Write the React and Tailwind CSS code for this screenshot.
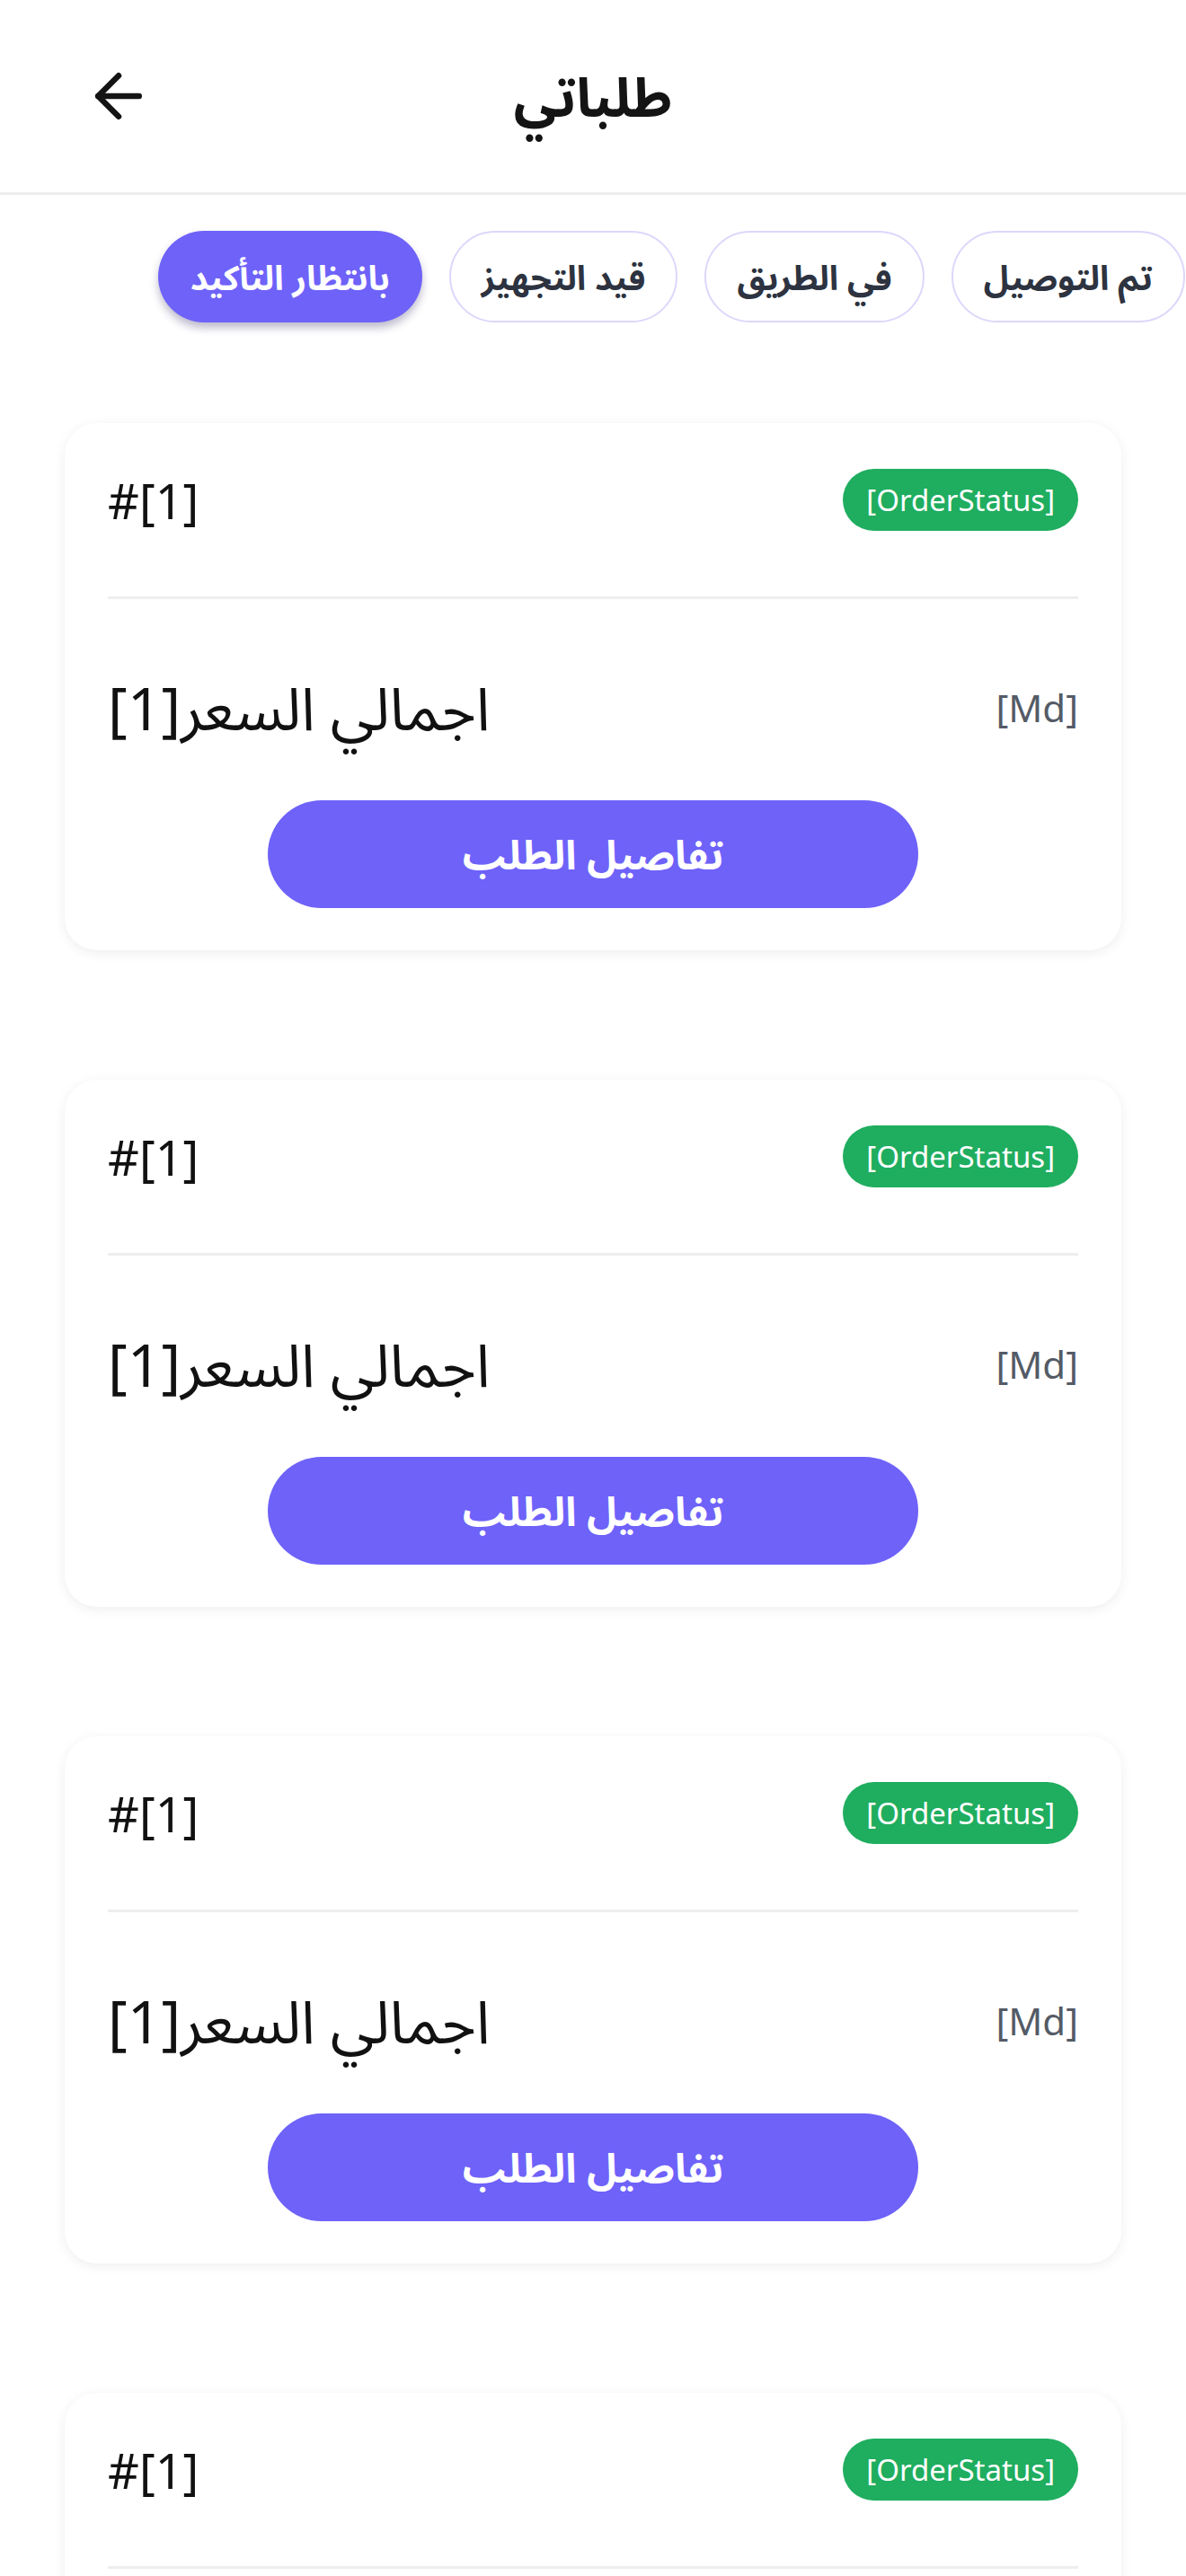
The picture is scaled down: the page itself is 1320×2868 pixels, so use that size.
import React from "react";
import { ArrowLeft } from "lucide-react";

const tabs = [
  { id: "delivered", label: "تم التوصيل" },
  { id: "onway", label: "في الطريق" },
  { id: "preparing", label: "قيد التجهيز" },
  { id: "pending", label: "بانتظار التأكيد" },
];

const orders = [1, 2, 3, 4];

function OrderCard() {
  return (
    <div className="bg-white rounded-[36px] shadow-[0_3px_14px_rgba(0,0,0,0.07)] px-[48px] pt-[51px] pb-[47px]">
      <div className="flex items-center justify-between">
        <span
          dir="ltr"
          className="h-[69px] px-[26px] rounded-full bg-[#1fad5f] text-white text-[33px] flex items-center"
        >
          [OrderStatus]
        </span>
        <span dir="ltr" className="text-[54px] leading-none text-[#111111]">
          #[1]
        </span>
      </div>

      <div className="mt-[73px] h-[3px] bg-[#eeeeee]" />

      <div className="mt-[78px] flex items-center justify-between h-[84px]">
        <span dir="ltr" className="text-[42px] text-[#545b66]">
          [Md]
        </span>
        <span className="text-[66px] leading-none text-[#111111]">اجمالي السعر[1]</span>
      </div>

      <div className="mt-[62px] flex justify-center">
        <button className="w-[724px] h-[120px] rounded-full bg-[#6e62f9] text-white text-[45px] font-bold">
          تفاصيل الطلب
        </button>
      </div>
    </div>
  );
}

export default function App() {
  const active = "pending";

  return (
    <div
      dir="rtl"
      className="w-[1320px] h-[2868px] overflow-hidden bg-white font-['Noto_Sans','Noto_Sans_Arabic','DejaVu_Sans',sans-serif]"
    >
      {/* header */}
      <div className="h-[217px] border-b-[3px] border-[#eeeeee] flex items-center justify-between px-[93px]">
        <div className="w-[78px]" />
        <h1 className="text-[60px] font-bold text-[#141414]">طلباتي</h1>
        <ArrowLeft size={78} strokeWidth={2} className="text-[#141414]" />
      </div>

      {/* status tabs */}
      <div className="mt-[40px] flex gap-[30px] pr-[1px]">
        {tabs.map((t) =>
          t.id === active ? (
            <button
              key={t.id}
              className="h-[102px] px-[36px] rounded-full bg-[#6e62f9] text-white text-[38px] font-bold shadow-[0_6px_10px_rgba(40,30,90,0.3)] whitespace-nowrap"
            >
              {t.label}
            </button>
          ) : (
            <button
              key={t.id}
              className="h-[102px] px-[34px] rounded-full bg-white border-2 border-[#dcd7fb] text-[#2d3340] text-[38px] font-bold whitespace-nowrap"
            >
              {t.label}
            </button>
          )
        )}
      </div>

      {/* orders */}
      <div className="mt-[112px] px-[72px] flex flex-col gap-[144px]">
        {orders.map((o) => (
          <OrderCard key={o} />
        ))}
      </div>
    </div>
  );
}
